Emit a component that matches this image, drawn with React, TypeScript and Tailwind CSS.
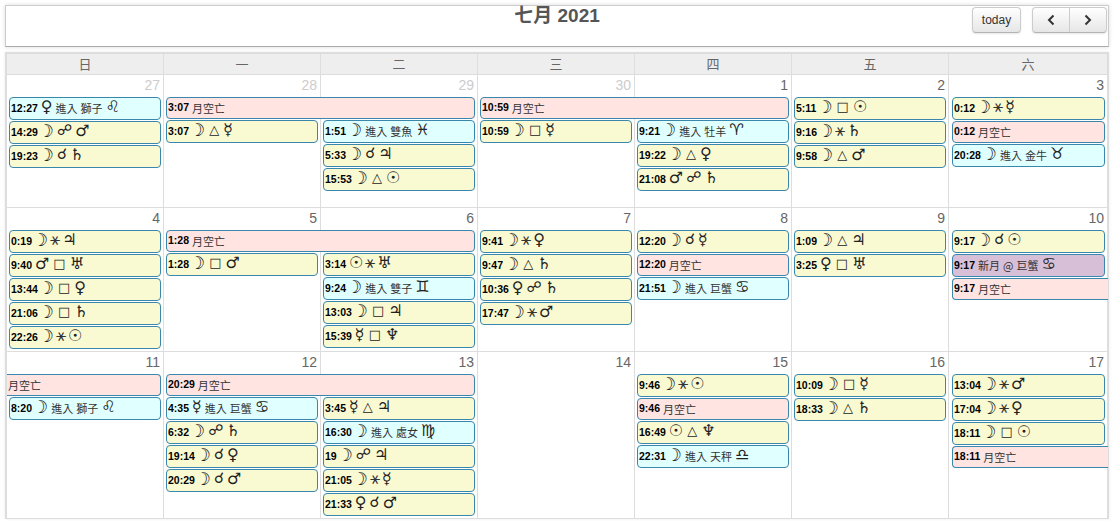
import React from "react";

type Kind = "y" | "b" | "p" | "v";
type Ev = { t?: string; s?: string; k: Kind; open?: "left" | "right" };
type Group = { col: number; bar?: Ev; span?: number; items: Ev[] };
type Week = { cls: string; days: { n: number; muted?: boolean }[]; groups: Group[] };

const kindCls: Record<Kind, string> = {
  y: "bg-[#fafad2] h-[23px] mb-px",
  b: "bg-[#e0ffff] h-[23px] mb-px",
  p: "bg-[#ffe4e1] h-[22px] mb-px",
  v: "bg-[#d8bfd8] h-[23px] mb-px",
};

const colCls = ["col-start-1", "col-start-2", "col-start-3", "col-start-4", "col-start-5", "col-start-6", "col-start-7"];

const symSize: Record<string, string> = {
  "☽": "text-[18px] -mt-[4px] -ml-[3px]",
  "⚹": "text-[17px] -mt-[4px] -mx-[1px] text-[#333]",
  "□": "text-[13px] -mt-[4px] mx-[1px]",
  "△": "text-[13px] -mt-[4px] mx-[1px]",
  "☍": "text-[15px] -mt-[4px]",
  "☌": "text-[15px] -mt-[4px]",
};

function Label({ e }: { e: Ev }) {
  return (
    <div className="flex items-center gap-[3px] h-full whitespace-nowrap pl-[1px]">
      {e.t && <b className="font-bold text-[10.5px] text-black font-['Liberation_Sans',sans-serif]">{e.t}</b>}
      {(e.s ?? "").split(" ").map((tok, i) =>
        /[\u3000-\u9fff@]/.test(tok) ? (
          <span key={i} className="text-[11px] leading-none text-[#333] font-['Noto_Sans_CJK_TC',sans-serif]">{tok}</span>
        ) : (
          <span key={i} className={`${symSize[tok] ?? "text-[16px] -mt-[4px]"} leading-none text-[#222] font-['DejaVu_Sans',sans-serif]`}>{tok}</span>
        )
      )}
    </div>
  );
}

function Item({ e, barSpan }: { e: Ev; barSpan?: number }) {
  const shape =
    e.open === "right"
      ? "rounded-l-[4px] border-r-0 -mr-[3px]"
      : e.open === "left"
      ? "rounded-r-[4px] border-l-0 -ml-[2px]"
      : "rounded-[4px]";
  const box = barSpan ? "bg-[#ffe4e1] h-[22px]" : kindCls[e.k];
  return (
    <div className={`border border-[#3a87ad] ${shape} ${box}`}>
      <Label e={e} />
    </div>
  );
}

const y = (t: string, s: string): Ev => ({ t, s, k: "y" });
const b = (t: string, s: string): Ev => ({ t, s, k: "b" });
const p = (t: string): Ev => ({ t, s: "月空亡", k: "p" });

const weeks: Week[] = [
  {
    cls: "h-[133px]",
    days: [
      { n: 27, muted: true },
      { n: 28, muted: true },
      { n: 29, muted: true },
      { n: 30, muted: true },
      { n: 1 },
      { n: 2 },
      { n: 3 },
    ],
    groups: [
      { col: 0, items: [b("12:27", "♀ 進入 獅子 ♌\uFE0E"), y("14:29", "☽ ☍ ♂"), y("19:23", "☽ ☌ ♄")] },
      { col: 1, span: 2, bar: p("3:07"), items: [] },
      { col: 1, items: [y("3:07", "☽ △ ☿")] },
      { col: 2, items: [b("1:51", "☽ 進入 雙魚 ♓\uFE0E"), y("5:33", "☽ ☌ ♃"), y("15:53", "☽ △ ☉")] },
      { col: 3, span: 2, bar: p("10:59"), items: [] },
      { col: 3, items: [y("10:59", "☽ □ ☿")] },
      { col: 4, items: [b("9:21", "☽ 進入 牡羊 ♈\uFE0E"), y("19:22", "☽ △ ♀"), y("21:08", "♂ ☍ ♄")] },
      { col: 5, items: [y("5:11", "☽ □ ☉"), y("9:16", "☽ ⚹ ♄"), y("9:58", "☽ △ ♂")] },
      { col: 6, items: [y("0:12", "☽ ⚹ ☿"), p("0:12"), b("20:28", "☽ 進入 金牛 ♉\uFE0E")] },
    ],
  },
  {
    cls: "h-[144px]",
    days: [{ n: 4 }, { n: 5 }, { n: 6 }, { n: 7 }, { n: 8 }, { n: 9 }, { n: 10 }],
    groups: [
      { col: 0, items: [y("0:19", "☽ ⚹ ♃"), y("9:40", "♂ □ ♅"), y("13:44", "☽ □ ♀"), y("21:06", "☽ □ ♄"), y("22:26", "☽ ⚹ ☉")] },
      { col: 1, span: 2, bar: p("1:28"), items: [] },
      { col: 1, items: [y("1:28", "☽ □ ♂")] },
      { col: 2, items: [y("3:14", "☉ ⚹ ♅"), b("9:24", "☽ 進入 雙子 ♊\uFE0E"), y("13:03", "☽ □ ♃"), y("15:39", "☿ □ ♆")] },
      { col: 3, items: [y("9:41", "☽ ⚹ ♀"), y("9:47", "☽ △ ♄"), y("10:36", "♀ ☍ ♄"), y("17:47", "☽ ⚹ ♂")] },
      { col: 4, items: [y("12:20", "☽ ☌ ☿"), p("12:20"), b("21:51", "☽ 進入 巨蟹 ♋\uFE0E")] },
      { col: 5, items: [y("1:09", "☽ △ ♃"), y("3:25", "♀ □ ♅")] },
      {
        col: 6,
        items: [y("9:17", "☽ ☌ ☉"), { t: "9:17", s: "新月 @ 巨蟹 ♋\uFE0E", k: "v" }, { ...p("9:17"), open: "right" }],
      },
    ],
  },
  {
    cls: "h-[167px]",
    days: [{ n: 11 }, { n: 12 }, { n: 13 }, { n: 14 }, { n: 15 }, { n: 16 }, { n: 17 }],
    groups: [
      { col: 0, items: [{ s: "月空亡", k: "p", open: "left" }, b("8:20", "☽ 進入 獅子 ♌\uFE0E")] },
      { col: 1, span: 2, bar: p("20:29"), items: [] },
      { col: 1, items: [b("4:35", "☿ 進入 巨蟹 ♋\uFE0E"), y("6:32", "☽ ☍ ♄"), y("19:14", "☽ ☌ ♀"), y("20:29", "☽ ☌ ♂")] },
      { col: 2, items: [y("3:45", "☿ △ ♃"), b("16:30", "☽ 進入 處女 ♍\uFE0E"), y("19", "☽ ☍ ♃"), y("21:05", "☽ ⚹ ☿"), y("21:33", "♀ ☌ ♂")] },
      { col: 4, items: [y("9:46", "☽ ⚹ ☉"), p("9:46"), y("16:49", "☉ △ ♆"), b("22:31", "☽ 進入 天秤 ♎\uFE0E")] },
      { col: 5, items: [y("10:09", "☽ □ ☿"), y("18:33", "☽ △ ♄")] },
      { col: 6, items: [y("13:04", "☽ ⚹ ♂"), y("17:04", "☽ ⚹ ♀"), y("18:11", "☽ □ ☉"), { ...p("18:11"), open: "right" }] },
    ],
  },
];

const heads = ["日", "一", "二", "三", "四", "五", "六"];
const cols = "grid grid-cols-[157px_157px_157px_157px_157px_157px_minmax(0,1fr)]";

function WeekRow({ w }: { w: Week }) {
  return (
    <div className={`${cols} grid-rows-[22px_23px_minmax(0,1fr)] border-b border-[#ddd] ${w.cls}`}>
      {w.days.map((d, i) => (
        <div
          key={i}
          className={`${colCls[i]} [grid-row:1/-1] ${i < 6 ? "border-r border-[#ddd]" : ""} pr-[3px] text-right text-[14px] leading-[20px] font-['Liberation_Sans',sans-serif] ${
            d.muted ? "text-[#ccc]" : "text-[#666]"
          }`}
        >
          {d.n}
        </div>
      ))}
      {w.groups.map((g, i) =>
        g.bar ? (
          <div key={i} className={`${colCls[g.col]} col-span-2 row-start-2 pl-[2px] pr-[3px]`}>
            <Item e={g.bar} barSpan={g.span} />
          </div>
        ) : (
          <div
            key={i}
            className={`${colCls[g.col]} ${
              w.groups.some((o) => o.bar && (o.col === g.col || o.col + 1 === g.col))
                ? "row-start-3"
                : "row-start-2 row-span-2"
            } ${g.col === 6 ? "pl-[3px] pr-[2px]" : "pl-[2px] pr-[3px]"}`}
          >
            {g.items.map((e, j) => (
              <Item key={j} e={e} />
            ))}
          </div>
        )
      )}
    </div>
  );
}

export default function App() {
  return (
    <div className="h-[521px] w-[1117px] overflow-hidden bg-white font-['Liberation_Sans','Noto_Sans_CJK_TC',sans-serif] pt-[5px] pl-[5px]">
      <div className="w-[1104px] h-[42px] border border-[#ccc] border-b-[#aaa] shadow-[0_0_4px_rgba(0,0,0,0.15)] relative flex justify-center">
        <h2 className="text-[19px] leading-[20px] font-bold text-[#555] font-['Liberation_Sans','Noto_Sans_CJK_TC',sans-serif]">七月 2021</h2>
        <div className="absolute right-[1px] top-[1px] flex gap-[11px] text-[12px] text-[#333]">
          <button className="h-[26px] w-[49px] rounded-[4px] border border-[#ccc] border-b-[#b3b3b3] bg-gradient-to-b from-white to-[#e6e6e6] shadow-[0_1px_2px_rgba(0,0,0,0.1)]">today</button>
          <div className="flex h-[26px] rounded-[4px] border border-[#ccc] border-b-[#b3b3b3] bg-gradient-to-b from-white to-[#e6e6e6] shadow-[0_1px_2px_rgba(0,0,0,0.1)]">
            <button className="w-[37px] border-r border-[#ccc] flex items-center justify-center">
              <svg width="8" height="12" viewBox="0 0 8 12" fill="none" stroke="#333" strokeWidth="2"><path d="M6.5 1.5 2 6l4.5 4.5" /></svg>
            </button>
            <button className="w-[36px] flex items-center justify-center">
              <svg width="8" height="12" viewBox="0 0 8 12" fill="none" stroke="#333" strokeWidth="2"><path d="M1.5 1.5 6 6l-4.5 4.5" /></svg>
            </button>
          </div>
        </div>
      </div>
      <div className="mt-[5px] w-[1104px] border-l-2 border-r-2 border-t-2 border-[#ddd] shadow-[0_0_3px_rgba(0,0,0,0.08)]">
        <div className={`${cols} h-[21px] bg-[#eee] border-b border-[#ddd]`}>
          {heads.map((h, i) => (
            <div key={h} className={`text-center text-[13px] leading-[20px] text-[#666] font-['Noto_Sans_CJK_TC',sans-serif] ${i < 6 ? "border-r border-[#ddd]" : ""}`}>{h}</div>
          ))}
        </div>
        {weeks.map((w) => (
          <WeekRow key={w.days[0].n} w={w} />
        ))}
      </div>
    </div>
  );
}
